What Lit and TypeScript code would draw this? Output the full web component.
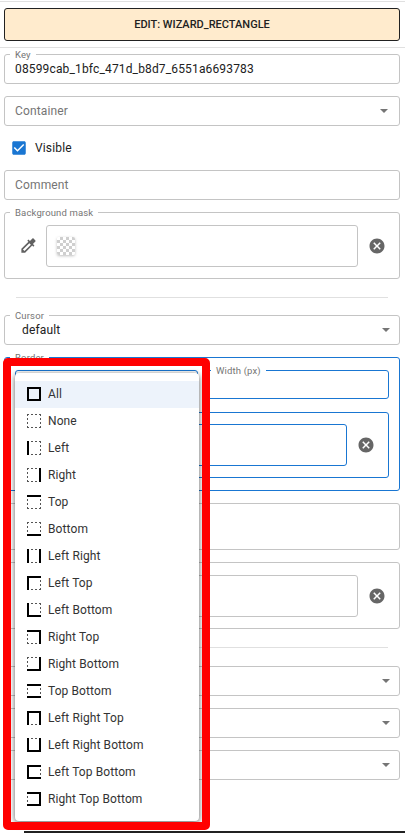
import { LitElement, html, css, svg } from 'lit';
import { customElement } from 'lit/decorators.js';

type Side = 'l' | 'r' | 't' | 'b';

const BORDER_OPTIONS: { label: string; sides: Side[] }[] = [
  { label: 'All', sides: ['l', 'r', 't', 'b'] },
  { label: 'None', sides: [] },
  { label: 'Left', sides: ['l'] },
  { label: 'Right', sides: ['r'] },
  { label: 'Top', sides: ['t'] },
  { label: 'Bottom', sides: ['b'] },
  { label: 'Left Right', sides: ['l', 'r'] },
  { label: 'Left Top', sides: ['l', 't'] },
  { label: 'Left Bottom', sides: ['l', 'b'] },
  { label: 'Right Top', sides: ['r', 't'] },
  { label: 'Right Bottom', sides: ['r', 'b'] },
  { label: 'Top Bottom', sides: ['t', 'b'] },
  { label: 'Left Right Top', sides: ['l', 'r', 't'] },
  { label: 'Left Right Bottom', sides: ['l', 'r', 'b'] },
  { label: 'Left Top Bottom', sides: ['l', 't', 'b'] },
  { label: 'Right Top Bottom', sides: ['r', 't', 'b'] },
];

const SIDE_LINES: Record<Side, { dotted: string; solid: string }> = {
  l: { dotted: 'M.5 0V14', solid: 'M1 0V14' },
  r: { dotted: 'M13.5 0V14', solid: 'M13 0V14' },
  t: { dotted: 'M0 .5H14', solid: 'M0 1H14' },
  b: { dotted: 'M0 13.5H14', solid: 'M0 13H14' },
};

const sideIcon = (sides: Side[]) => html`
  <svg class="side-icon" width="14" height="14" viewBox="0 0 14 14" fill="none">
    ${(['l', 'r', 't', 'b'] as Side[]).filter((s) => !sides.includes(s)).map(
      (s) => svg`<path d=${SIDE_LINES[s].dotted} stroke="#555" stroke-width="1" stroke-dasharray="2 2"/>`
    )}
    ${sides.map((s) => svg`<path d=${SIDE_LINES[s].solid} stroke="#000" stroke-width="2"/>`)}
  </svg>
`;

const clearIcon = html`
  <svg class="clear" width="18" height="18" viewBox="0 0 24 24">
    <path d="M12 2C6.47 2 2 6.47 2 12s4.47 10 10 10 10-4.47 10-10S17.53 2 12 2zm5 13.59L15.59 17 12 13.41 8.41 17 7 15.59 10.59 12 7 8.41 8.41 7 12 10.59 15.59 7 17 8.41 13.41 12 17 15.59z"/>
  </svg>
`;

const pickerIcon = html`
  <svg class="picker" width="19" height="19" viewBox="0 0 24 24">
    <path d="M20.71 5.63l-2.34-2.34c-.39-.39-1.02-.39-1.41 0l-3.12 3.12-1.93-1.91-1.41 1.41 1.42 1.42L3 16.25V21h4.75l8.92-8.92 1.42 1.42 1.41-1.41-1.92-1.92 3.12-3.12c.4-.4.4-1.03.01-1.42zM6.92 19L5 17.08l8.06-8.06 1.92 1.92L6.92 19z"/>
  </svg>
`;

@customElement('app-root')
export class AppRoot extends LitElement {
  static styles = css`
    :host {
      display: block;
      position: relative;
      width: 405px;
      height: 833px;
      overflow: hidden;
      background: #fff;
      font-family: Roboto, 'Liberation Sans', sans-serif;
      color: #212121;
    }

    .page {
      height: 833px;
      box-sizing: border-box;
      display: flex;
      flex-direction: column;
    }

    .top-line {
      height: 1px;
      margin-top: 1px;
      background: #e0e0e0;
    }

    .form {
      display: flex;
      flex-direction: column;
      gap: 12px;
      padding: 6px 5px 0 4px;
    }

    .banner {
      height: 33px;
      box-sizing: border-box;
      display: flex;
      align-items: center;
      justify-content: center;
      background: #ffebcd;
      border: 1px solid #212121;
      border-radius: 3px;
      font-size: 11px;
      font-weight: 500;
    }

    .rule {
      height: 1px;
      background: #e0e0e0;
      margin: -6px -5px -6px -4px;
    }

    .field {
      position: relative;
      box-sizing: border-box;
      height: 30px;
      display: flex;
      align-items: center;
      justify-content: space-between;
      padding: 0 10px;
      border: 1px solid #c4c4c4;
      border-radius: 3px;
      font-size: 12px;
      letter-spacing: 0.15px;
    }

    .field.blue,
    .group.blue {
      border-color: #1976d2;
    }

    .placeholder {
      color: #757575;
    }

    .label {
      position: absolute;
      left: 5px;
      top: -6px;
      padding: 0 5px;
      background: #fff;
      font-size: 9.5px;
      line-height: 11px;
      letter-spacing: 0.15px;
      color: #757575;
    }

    .arrow {
      width: 0;
      height: 0;
      border-left: 4.5px solid transparent;
      border-right: 4.5px solid transparent;
      border-top: 4.5px solid #757575;
      margin-right: 1px;
    }

    .arrow.wide {
      margin-right: -1px;
    }

    .check-row {
      height: 20px;
      display: flex;
      align-items: center;
      gap: 7px;
      padding-left: 6px;
      font-size: 12px;
      letter-spacing: 0.15px;
    }

    .check-row svg {
      fill: #1976d2;
    }

    .group {
      position: relative;
      box-sizing: border-box;
      height: 67px;
      display: grid;
      grid-template-columns: 41px 1fr 41px;
      align-items: center;
      border: 1px solid #c4c4c4;
      border-radius: 3px;
    }

    .group > svg {
      justify-self: center;
    }

    .group > .picker {
      margin-left: 5px;
    }

    .group > .clear {
      margin-right: 3px;
    }

    .slot {
      box-sizing: border-box;
      height: 42px;
      display: flex;
      align-items: center;
      padding-left: 10px;
      border: 1px solid #c4c4c4;
      border-radius: 3px;
    }

    .group.blue .slot {
      border-color: #1976d2;
    }

    .swatch {
      width: 18px;
      height: 18px;
      border-radius: 2px;
      background: repeating-conic-gradient(#cfcfcf 0 25%, #fff 0 50%) 0 0 / 6px 6px;
      box-shadow: 0 1px 3px rgba(0, 0, 0, 0.25);
    }

    .clear {
      fill: #666;
    }

    .picker {
      fill: #616161;
    }

    .divider {
      height: 1px;
      margin: 6px 12px 5px;
      background: #e0e0e0;
    }

    .divider.lower {
      margin-bottom: 6px;
    }

    .cursor {
      height: 30px;
      padding-left: 17px;
    }

    .border-box {
      position: relative;
      box-sizing: border-box;
      height: 134px;
      display: flex;
      flex-direction: column;
      gap: 13px;
      padding: 12px 10px;
      border: 1px solid #1976d2;
      border-radius: 3px;
    }

    .border-row {
      display: grid;
      grid-template-columns: 183px 1fr;
      gap: 7px;
    }

    .border-row .field {
      height: 29px;
    }

    .tall {
      height: 47px;
      box-sizing: border-box;
      border: 1px solid #c4c4c4;
      border-radius: 3px;
    }

    .push-right {
      margin-left: auto;
    }

    .bottom-bar {
      height: 2px;
      margin: auto 0 0 24px;
      background: #212121;
    }

    /* dropdown and the red annotation frame lying over the form */
    .menu {
      position: absolute;
      left: 15px;
      top: 373px;
      width: 184px;
      padding: 8px 0;
      background: #fff;
      border-radius: 4px;
      box-shadow: 0 3px 6px rgba(0, 0, 0, 0.4), 0 0 5px rgba(0, 0, 0, 0.3);
    }

    .item {
      box-sizing: border-box;
      height: 27px;
      display: flex;
      align-items: center;
      gap: 7px;
      padding: 0 0 1px 12px;
      font-size: 12px;
      letter-spacing: 0.1px;
      color: #333;
    }

    .item.selected {
      background: #edf3fb;
    }

    .frame {
      position: absolute;
      left: 3px;
      top: 358px;
      width: 207px;
      height: 472px;
      box-sizing: border-box;
      border: 8px solid #ff0000;
      border-radius: 5px;
    }
  `;

  render() {
    return html`
      <div class="page">
        <div class="top-line"></div>
        <div class="form">
          <div class="banner">EDIT: WIZARD_RECTANGLE</div>
          <div class="rule"></div>

          <div class="field"><span class="label">Key</span>08599cab_1bfc_471d_b8d7_6551a6693783</div>
          <div class="field">
            <span class="placeholder">Container</span>
            <span class="arrow"></span>
          </div>
          <div class="check-row">
            <svg width="18" height="18" viewBox="0 0 24 24">
              <path d="M19 3H5c-1.11 0-2 .9-2 2v14c0 1.1.89 2 2 2h14c1.11 0 2-.9 2-2V5c0-1.1-.89-2-2-2zm-9 14l-5-5 1.41-1.41L10 14.17l7.59-7.59L19 8l-9 9z"/>
            </svg>
            Visible
          </div>
          <div class="field"><span class="placeholder">Comment</span></div>
          <div class="group">
            <span class="label">Background mask</span>
            ${pickerIcon}
            <div class="slot"><div class="swatch"></div></div>
            ${clearIcon}
          </div>

          <div class="divider"></div>

          <div class="field cursor">
            <span class="label">Cursor</span>
            default
            <span class="arrow wide"></span>
          </div>
          <div class="border-box">
            <span class="label">Border</span>
            <div class="border-row">
              <div class="field blue"></div>
              <div class="field blue"><span class="label">Width (px)</span></div>
            </div>
            <div class="group blue">
              ${pickerIcon}
              <div class="slot"></div>
              ${clearIcon}
            </div>
          </div>
          <div class="tall"></div>
          <div class="group">
            ${pickerIcon}
            <div class="slot"></div>
            ${clearIcon}
          </div>

          <div class="divider lower"></div>

          <div class="field"><span class="arrow wide push-right"></span></div>
          <div class="field"><span class="arrow wide push-right"></span></div>
          <div class="field"><span class="arrow wide push-right"></span></div>
        </div>
        <div class="bottom-bar"></div>
      </div>

      <div class="menu">
        ${BORDER_OPTIONS.map(
          (o, i) => html`
            <div class="item ${i === 0 ? 'selected' : ''}">${sideIcon(o.sides)}${o.label}</div>
          `
        )}
      </div>
      <div class="frame"></div>
    `;
  }
}
